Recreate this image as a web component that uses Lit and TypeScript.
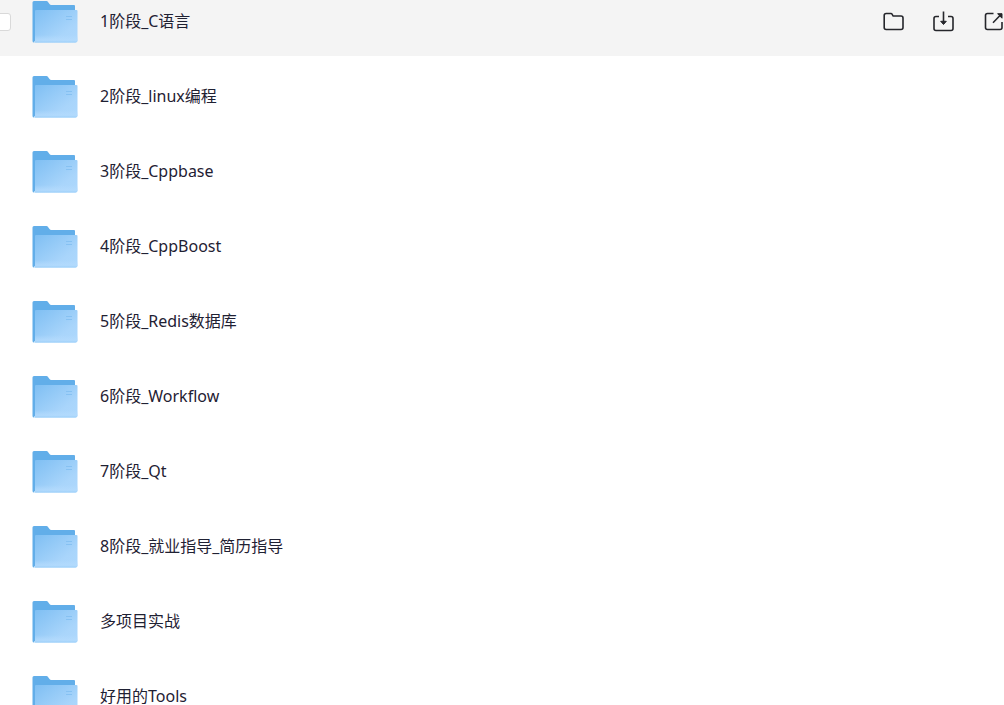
import { LitElement, html, css, svg } from "lit";
import { customElement, property } from "lit/decorators.js";
import { classMap } from "lit/directives/class-map.js";

const icons = {
  open: svg`<path d="M2.2 5.5Q2.2 3.5 4.2 3.5H8.8Q9.8 3.5 10.3 4.5L11 6H19Q21 6 21 8V17.5Q21 19.5 19 19.5H4.2Q2.2 19.5 2.2 17.5Z"/>`,
  download: svg`<path d="M7 6.5H4Q2 6.5 2 8.5V18.5Q2 20.5 4 20.5H19Q21 20.5 21 18.5V8.5Q21 6.5 19 6.5H16M11.5 1.5V13"/><path class="solid" d="M8.7 11.3H14.3L11.5 14.5Z"/>`,
  share: svg`<path d="M11.5 3.5H5.5Q3.5 3.5 3.5 5.5V17.5Q3.5 19.5 5.5 19.5H18Q20 19.5 20 17.5V12M11 12.7L18 5.5"/><path class="solid" d="M15.6 3.7H20V8.2Z"/>`,
};

@customElement("folder-icon")
export class FolderIcon extends LitElement {
  static styles = css`
    :host { display: block; flex: none; }
    .art { display: block; width: 46px; height: 42px; }
  `;

  render() {
    return html`<svg class="art" viewBox="0 0 46 42" aria-hidden="true">
      <defs>
        <linearGradient id="front" x1="0" y1="0" x2="1" y2="1">
          <stop offset="0" stop-color="#7fbff3" />
          <stop offset="0.7" stop-color="#a9d5fb" />
          <stop offset="1" stop-color="#aed8fd" />
        </linearGradient>
        <linearGradient id="shine" x1="0" y1="0" x2="0" y2="1">
          <stop offset="0" stop-color="#b4dbfd" stop-opacity="0" />
          <stop offset="0.7" stop-color="#b4dbfd" stop-opacity="0.8" />
          <stop offset="1" stop-color="#9bcff9" />
        </linearGradient>
      </defs>
      <path fill="#62aee9" d="M0.5 1.5Q0.5 0 2 0H14.5Q15.5 0 16 1L17.5 3Q18 4 19.5 4H42Q43 4 43 5V40H2.5V41.5H2Q0.5 41.5 0.5 40Z" />
      <path fill="url(#front)" d="M3 10Q3 9 4 9H44.5Q45.5 9 45.5 10V39.5Q45.5 41.5 43.5 41.5H3Z" />
      <path fill="url(#shine)" d="M3 34H45.5V39.5Q45.5 41.5 43.5 41.5H3Z" />
      <path fill="#86c1f2" d="M34 15H40V16H34ZM34 18H40V19H34Z" />
    </svg>`;
  }
}

@customElement("file-row")
export class FileRow extends LitElement {
  @property() name = "";
  @property({ type: Boolean }) active = false;

  static styles = css`
    :host { display: block; }
    .row {
      box-sizing: border-box;
      display: flex;
      align-items: center;
      height: 75px;
      padding-top: 7px;
      overflow: hidden;
      background: #fff;
    }
    .row.active { background: #f4f4f4; }
    .check {
      appearance: none;
      box-sizing: border-box;
      flex: none;
      width: 18px;
      height: 18px;
      margin: 0 21px 0 -7px;
      border: 1px solid #d9d9d9;
      border-radius: 3px;
      background: #fff;
      visibility: hidden;
    }
    .active .check { visibility: visible; }
    .link {
      flex: 1;
      min-width: 0;
      padding: 0 0 2px 22px;
      white-space: nowrap;
      font: 16px/18px "Noto Sans", "Noto Sans CJK SC", sans-serif;
      color: #1f2133;
      text-decoration: none;
    }
    .actions { display: flex; gap: 26px; margin-right: -2px; }
    .action {
      width: 24px;
      height: 24px;
      padding: 0;
      border: 0;
      background: none;
      color: #25262b;
    }
    .glyph {
      display: block;
      fill: none;
      stroke: currentColor;
      stroke-width: 1.6;
      stroke-linejoin: round;
    }
    .solid { fill: currentColor; stroke-width: 1; }
  `;

  private action(label: string, shape: unknown) {
    return html`<button class="action" type="button" aria-label=${label}>
      <svg class="glyph" width="24" height="24" viewBox="0 0 24 24" aria-hidden="true">${shape}</svg>
    </button>`;
  }

  render() {
    return html`<div class=${classMap({ row: true, active: this.active })}>
      <input class="check" type="checkbox" aria-label=${this.name} />
      <folder-icon></folder-icon>
      <a class="link" href="#">${this.name}</a>
      ${this.active
        ? html`<div class="actions">
            ${this.action("打开", icons.open)}
            ${this.action("下载", icons.download)}
            ${this.action("分享", icons.share)}
          </div>`
        : null}
    </div>`;
  }
}

@customElement("app-root")
export class AppRoot extends LitElement {
  private folders = [
    "1阶段_C语言",
    "2阶段_linux编程",
    "3阶段_Cppbase",
    "4阶段_CppBoost",
    "5阶段_Redis数据库",
    "6阶段_Workflow",
    "7阶段_Qt",
    "8阶段_就业指导_简历指导",
    "多项目实战",
    "好用的Tools",
  ];

  static styles = css`
    :host { display: block; height: 100vh; overflow: hidden; background: #fff; }
    .list { margin: -19px 0 0; padding: 0; list-style: none; }
  `;

  render() {
    return html`<ul class="list">
      ${this.folders.map((name, i) => html`<li><file-row .name=${name} ?active=${i === 0}></file-row></li>`)}
    </ul>`;
  }
}
